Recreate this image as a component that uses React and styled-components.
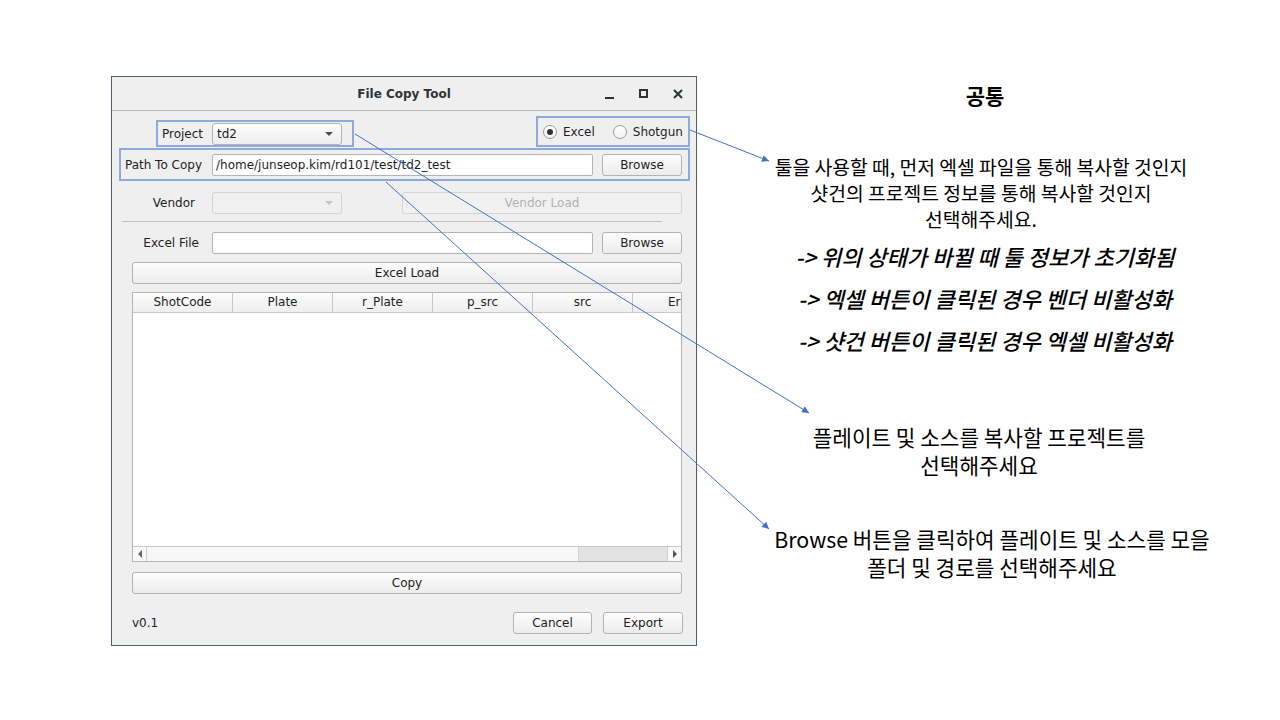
import React from 'react'
import styled, { createGlobalStyle } from 'styled-components'

const GlobalStyle = createGlobalStyle`
  html, body { margin: 0; padding: 0; background: #fff; }
  body { font-family: "DejaVu Sans", sans-serif; }
`

const Page = styled.div`
  position: relative;
  width: 1280px;
  height: 720px;
  box-sizing: border-box;
  padding: 76px 0 0 111px;
  display: flex;
  align-items: flex-start;
  overflow: hidden;
  background: #fff;
`

/* ---------- window ---------- */

const Window = styled.div`
  width: 586px;
  box-sizing: border-box;
  border: 1px solid #4f5d6b;
  background: #efefef;
  display: flex;
  flex-direction: column;
  font: 12px "DejaVu Sans", sans-serif;
  color: #1e1e1e;
`

const TitleBar = styled.div`
  height: 34px;
  box-sizing: border-box;
  border-bottom: 1px solid #b9b9b9;
  display: grid;
  grid-template-columns: 1fr auto 1fr;
  align-items: center;
  background: #efefef;
`

const Title = styled.div`
  grid-column: 2;
  font-weight: bold;
  font-size: 12px;
  color: #2e3436;
`

const Controls = styled.div`
  grid-column: 3;
  justify-self: end;
  display: flex;
  gap: 18px;
  padding-right: 10px;
  svg { display: block; }
`

const Content = styled.div`
  display: flex;
  flex-direction: column;
  padding: 5px 0 11px 0;
`

const TopRow = styled.div`
  height: 31px;
  display: flex;
  align-items: flex-end;
`

const Marked = styled.div`
  box-sizing: border-box;
  border: 2px solid #8eaadb;
  display: flex;
  align-items: center;
`

const ProjectBox = styled(Marked)`
  margin-left: 44px;
  width: 198px;
  height: 27px;
`

const RadioBox = styled(Marked)`
  margin-left: auto;
  margin-right: 6px;
  width: 154px;
  height: 31px;
  padding-left: 3px;
`

const PathBox = styled(Marked)`
  margin: 1px 6px 0 7px;
  height: 33px;
`

const FormRow = styled.div`
  display: flex;
  align-items: center;
  height: 22px;
  margin-top: ${p => p.$mt || 0}px;
`

const FieldLabel = styled.div`
  flex: none;
  box-sizing: border-box;
  width: ${p => p.$w}px;
  padding-right: ${p => p.$pr}px;
  text-align: right;
  white-space: nowrap;
`

const Input = styled.div`
  box-sizing: border-box;
  width: ${p => p.$w}px;
  height: 22px;
  flex: none;
  background: #fff;
  border: 1px solid #b5b5b5;
  border-radius: 2px;
  padding-left: 3px;
  display: flex;
  align-items: center;
  white-space: nowrap;
  overflow: hidden;
`

const Combo = styled.div`
  box-sizing: border-box;
  width: ${p => p.$w}px;
  height: 22px;
  flex: none;
  border: 1px solid ${p => (p.$disabled ? '#d3d3d3' : '#b3b3b3')};
  border-radius: 3px;
  background: ${p => (p.$disabled ? '#f0f0f0' : 'linear-gradient(#fdfdfd, #ededed)')};
  display: flex;
  align-items: center;
  padding: 0 8px 0 4px;
  &::after {
    content: '';
    margin-left: auto;
    border-left: 4px solid transparent;
    border-right: 4px solid transparent;
    border-top: 4px solid ${p => (p.$disabled ? '#c4c4c4' : '#505050')};
  }
`

const Button = styled.button`
  box-sizing: border-box;
  flex: none;
  width: ${p => (p.$w ? `${p.$w}px` : 'auto')};
  height: 22px;
  margin: 0 0 0 ${p => p.$ml || 0}px;
  padding: 0;
  font: 12px "DejaVu Sans", sans-serif;
  color: ${p => (p.disabled ? '#b2b2b2' : '#1e1e1e')};
  border: 1px solid ${p => (p.disabled ? '#d4d4d4' : '#b3b3b3')};
  border-radius: 3px;
  background: ${p => (p.disabled ? '#f1f1f1' : 'linear-gradient(#fdfdfd, #ececec)')};
`

const WideButton = styled(Button)`
  display: block;
  width: 550px;
  margin: ${p => p.$mt}px 0 0 20px;
`

const Radio = styled.span`
  flex: none;
  width: 14px;
  height: 14px;
  box-sizing: border-box;
  border-radius: 50%;
  border: 1px solid #9b9b9b;
  background: linear-gradient(#ffffff, #f2f2f2);
  margin: 0 6px 0 ${p => p.$ml}px;
  display: flex;
  align-items: center;
  justify-content: center;
  &::after {
    content: '';
    width: 6px;
    height: 6px;
    border-radius: 50%;
    background: ${p => (p.$checked ? '#333' : 'transparent')};
  }
`

const Separator = styled.div`
  margin: 7px 0 0 10px;
  width: 540px;
  height: 1px;
  background: #c2c2c2;
`

/* ---------- table ---------- */

const Table = styled.div`
  margin: 8px 0 0 20px;
  width: 550px;
  height: 270px;
  box-sizing: border-box;
  border: 1px solid #b4b4b4;
  background: #fff;
  display: flex;
  flex-direction: column;
  overflow: hidden;
`

const HeaderRow = styled.div`
  display: flex;
  height: 19px;
  flex: none;
  border-bottom: 1px solid #c8c8c8;
  background: linear-gradient(#fcfcfc, #eeeeee);
`

const HeaderCell = styled.div`
  flex: none;
  width: 100px;
  box-sizing: border-box;
  border-right: 1px solid #c8c8c8;
  text-align: center;
  line-height: 19px;
  white-space: nowrap;
`

const TableBody = styled.div`
  flex: 1;
`

const ScrollBar = styled.div`
  height: 14px;
  flex: none;
  border-top: 1px solid #c8c8c8;
  display: flex;
  background: #f7f7f7;
`

const ScrollArrow = styled.div`
  width: 14px;
  flex: none;
  box-sizing: border-box;
  border-right: ${p => (p.$dir === 'left' ? '1px solid #cfcfcf' : 'none')};
  border-left: ${p => (p.$dir === 'right' ? '1px solid #cfcfcf' : 'none')};
  display: flex;
  align-items: center;
  justify-content: center;
  background: #f9f9f9;
  &::after {
    content: '';
    border-top: 4px solid transparent;
    border-bottom: 4px solid transparent;
    ${p => (p.$dir === 'left' ? 'border-right: 4px solid #666;' : 'border-left: 4px solid #555;')}
  }
`

const ScrollTrack = styled.div`
  flex: 1;
  display: flex;
  justify-content: flex-end;
`

const ScrollThumb = styled.div`
  width: 88px;
  background: #e3e3e3;
  border-left: 1px solid #d2d2d2;
`

const Footer = styled.div`
  margin: 18px 13px 0 20px;
  height: 22px;
  display: flex;
  align-items: center;
`

const Version = styled.span`
  margin-right: auto;
`

/* ---------- notes ---------- */

const Notes = styled.div`
  width: 470px;
  margin: 5px 0 0 53px;
  display: flex;
  flex-direction: column;
  align-items: center;
  text-align: center;
  font-family: "Noto Sans CJK KR", sans-serif;
  color: #000;
`

const NoteTitle = styled.div`
  font-size: 21px;
  font-weight: 700;
  line-height: 28px;
`

// $shift nudges the centred block sideways, as the slide's text boxes are not all on one axis
const NoteText = styled.p`
  margin: ${p => p.$mt}px 0 0;
  padding: ${p => (p.$shift > 0 ? `0 0 0 ${p.$shift * 2}px` : `0 ${-(p.$shift || 0) * 2}px 0 0`)};
  font-size: ${p => p.$size}px;
  line-height: ${p => p.$lh}px;
  white-space: nowrap;
`

const Rule = styled.div`
  font-size: 22px;
  font-style: italic;
  font-weight: 500;
  line-height: 42px;
  white-space: nowrap;
  margin-top: ${p => p.$mt || 0}px;
`

const Overlay = styled.svg`
  position: absolute;
  left: 0;
  top: 0;
  pointer-events: none;
`

const columns = ['ShotCode', 'Plate', 'r_Plate', 'p_src', 'src', 'Error']

function WindowControls() {
  return (
    <Controls>
      <svg width="16" height="16" viewBox="0 0 16 16">
        <rect x="3" y="11" width="9" height="2" fill="#2e3436" />
      </svg>
      <svg width="16" height="16" viewBox="0 0 16 16">
        <rect x="4" y="4" width="7" height="7" fill="none" stroke="#2e3436" strokeWidth="2" />
      </svg>
      <svg width="16" height="16" viewBox="0 0 16 16">
        <path d="M4 4 L12 12 M12 4 L4 12" stroke="#2e3436" strokeWidth="2" />
      </svg>
    </Controls>
  )
}

export default function App() {
  return (
    <>
      <GlobalStyle />
      <Page>
        <Window>
          <TitleBar>
            <Title>File Copy Tool</Title>
            <WindowControls />
          </TitleBar>
          <Content>
            <TopRow>
              <ProjectBox>
                <FieldLabel $w={54} $pr={9}>Project</FieldLabel>
                <Combo $w={130}>td2</Combo>
              </ProjectBox>
              <RadioBox>
                <Radio $ml={2} $checked />
                <span>Excel</span>
                <Radio $ml={18} />
                <span>Shotgun</span>
              </RadioBox>
            </TopRow>
            <PathBox>
              <FieldLabel $w={91} $pr={10}>Path To Copy</FieldLabel>
              <Input $w={381}>/home/junseop.kim/rd101/test/td2_test</Input>
              <Button $w={80} $ml={9}>Browse</Button>
            </PathBox>
            <FormRow $mt={11}>
              <FieldLabel $w={100} $pr={17}>Vendor</FieldLabel>
              <Combo $w={130} $disabled />
              <Button $w={280} $ml={60} disabled>Vendor Load</Button>
            </FormRow>
            <Separator />
            <FormRow $mt={10}>
              <FieldLabel $w={100} $pr={13}>Excel File</FieldLabel>
              <Input $w={381} />
              <Button $w={80} $ml={9}>Browse</Button>
            </FormRow>
            <WideButton $mt={8}>Excel Load</WideButton>
            <Table>
              <HeaderRow>
                {columns.map(c => (
                  <HeaderCell key={c}>{c}</HeaderCell>
                ))}
              </HeaderRow>
              <TableBody />
              <ScrollBar>
                <ScrollArrow $dir="left" />
                <ScrollTrack>
                  <ScrollThumb />
                </ScrollTrack>
                <ScrollArrow $dir="right" />
              </ScrollBar>
            </Table>
            <WideButton $mt={10}>Copy</WideButton>
            <Footer>
              <Version>v0.1</Version>
              <Button $w={79}>Cancel</Button>
              <Button $w={80} $ml={11}>Export</Button>
            </Footer>
          </Content>
        </Window>

        <Notes>
          <NoteTitle>공통</NoteTitle>
          <NoteText $mt={45} $size={19.3} $lh={26} $shift={-4}>
            툴을 사용할 때, 먼저 엑셀 파일을 통해 복사할 것인지
            <br />
            샷건의 프로젝트 정보를 통해 복사할 것인지
            <br />
            선택해주세요.
          </NoteText>
          <Rule $mt={3}>-&gt; 위의 상태가 바뀔 때 툴 정보가 초기화됨</Rule>
          <Rule>-&gt; 엑셀 버튼이 클릭된 경우 벤더 비활성화</Rule>
          <Rule>-&gt; 샷건 버튼이 클릭된 경우 엑셀 비활성화</Rule>
          <NoteText $mt={62} $size={21.3} $lh={28} $shift={-6}>
            플레이트 및 소스를 복사할 프로젝트를
            <br />
            선택해주세요
          </NoteText>
          <NoteText $mt={46} $size={21.3} $lh={28} $shift={7}>
            Browse 버튼을 클릭하여 플레이트 및 소스를 모을
            <br />
            폴더 및 경로를 선택해주세요
          </NoteText>
        </Notes>

        <Overlay width="1280" height="720" viewBox="0 0 1280 720">
          <defs>
            <marker id="head" viewBox="0 0 10 10" refX="10" refY="5" markerWidth="9" markerHeight="7" markerUnits="userSpaceOnUse" orient="auto">
              <path d="M0 0 L10 5 L0 10 z" fill="#4472c4" />
            </marker>
          </defs>
          <g stroke="#4472c4" strokeWidth="1" fill="none">
            <line x1="690" y1="130" x2="769" y2="161" markerEnd="url(#head)" />
            <line x1="355" y1="134" x2="809" y2="413" markerEnd="url(#head)" />
            <line x1="386" y1="182" x2="769" y2="529" markerEnd="url(#head)" />
          </g>
        </Overlay>
      </Page>
    </>
  )
}
